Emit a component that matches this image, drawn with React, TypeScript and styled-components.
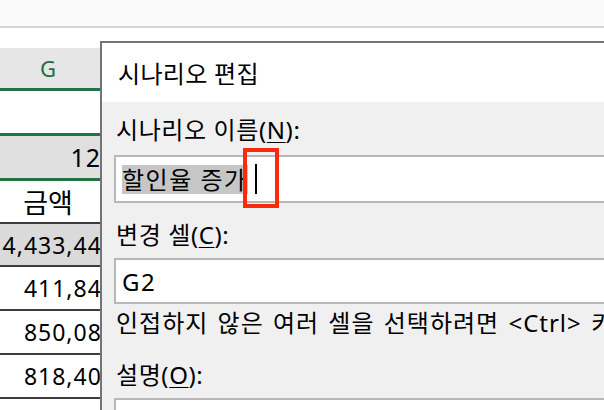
import styled, { createGlobalStyle } from "styled-components";

const GlobalStyle = createGlobalStyle`
  html, body {
    margin: 0;
    padding: 0;
    background: #ffffff;
  }
  body {
    width: 604px;
    height: 410px;
    overflow: hidden;
    font-family: "Noto Sans", "Noto Sans CJK KR", sans-serif;
    color: #000;
  }
`;

const Page = styled.div`
  width: 604px;
  height: 410px;
  overflow: hidden;
  display: flex;
  flex-direction: column;
`;

const TopBand = styled.div`
  height: 26px;
  flex: none;
  background: #fafafa;
  border-bottom: 2px solid #d4d4d4;
`;

const Workspace = styled.div`
  flex: 1;
  display: flex;
  align-items: flex-start;
  min-height: 0;
`;

const Sheet = styled.div`
  width: 100px;
  flex: none;
  overflow: hidden;
  padding-top: 20px;
`;

const Column = styled.div`
  width: 146px;
  margin-left: -25px;
  display: flex;
  flex-direction: column;
`;

const HeaderCell = styled.div`
  height: 40px;
  background: #e6e6e6;
  border-bottom: 3px solid #217346;
  display: flex;
  align-items: center;
  justify-content: center;
  font-size: 22px;
  color: #1f6e4a;
`;

type CellProps = {
  $fill?: string;
  $edge?: "green" | "dark";
  $align?: "center" | "right";
  $size?: number;
  $h?: number;
  $pad?: number;
};

const Cell = styled.div<CellProps>`
  height: ${(p) => p.$h ?? 42}px;
  background: ${(p) => p.$fill ?? "#ffffff"};
  border-bottom: ${(p) =>
    p.$edge === "green" ? "3px solid #217346" : "2px solid #3c3c3c"};
  display: flex;
  align-items: center;
  justify-content: ${(p) => (p.$align === "center" ? "center" : "flex-end")};
  padding-right: ${(p) => (p.$align === "center" ? 0 : p.$pad ?? 5)}px;
  font-size: ${(p) => p.$size ?? 23}px;
  letter-spacing: ${(p) => (p.$align === "center" ? 0 : 1)}px;
  white-space: nowrap;
`;

const Dialog = styled.div`
  flex: 1;
  margin-top: 13px;
  border-top: 2px solid #747474;
  border-left: 2px solid #747474;
  display: flex;
  flex-direction: column;
`;

const TitleBar = styled.div`
  height: 59px;
  background: #ffffff;
  display: flex;
  align-items: center;
  padding-left: 16px;
  font-size: 24px;
  letter-spacing: 0.3px;
`;

const Body = styled.div`
  background: #f0f0f0;
  padding: 14px 0 20px 14px;
  display: flex;
  flex-direction: column;
  height: 400px;
`;

const Label = styled.div<{ $gap?: number }>`
  height: 28px;
  line-height: 28px;
  font-size: 24px;
  letter-spacing: 0.6px;
  white-space: nowrap;
  margin-top: ${(p) => p.$gap ?? 0}px;
  u {
    text-decoration-thickness: 1px;
    text-underline-offset: 3px;
  }
`;

const Field = styled.div<{ $h: number; $gap: number }>`
  position: relative;
  height: ${(p) => p.$h}px;
  margin: ${(p) => p.$gap}px -40px 0 -2px;
  border: 2px solid #b8b8b8;
  background: #ffffff;
  display: flex;
  align-items: center;
  padding-left: 6px;
  font-size: 24px;
  letter-spacing: 1.5px;
  white-space: nowrap;
  box-sizing: border-box;
`;

const Selected = styled.span`
  background: #c6c6c6;
  line-height: 29px;
`;

const Caret = styled.span`
  width: 2px;
  height: 30px;
  background: #000;
  margin-left: 7px;
`;

const Marker = styled.div`
  position: absolute;
  left: 127px;
  top: -9px;
  width: 36px;
  height: 60px;
  box-sizing: border-box;
  border: 4px solid #fa2a0f;
`;

const Hint = styled.div`
  height: 28px;
  line-height: 28px;
  margin-top: 5px;
  font-size: 24px;
  letter-spacing: 1px;
  word-spacing: 2px;
  white-space: nowrap;
`;

const rows = ["4,433,440", "411,840", "850,080", "818,400", "2,792,000"];

export default function App() {
  return (
    <>
      <GlobalStyle />
      <Page>
        <TopBand />
        <Workspace>
          <Sheet>
            <Column>
              <HeaderCell>G</HeaderCell>
              <Cell $edge="green" />
              <Cell $edge="green" $fill="#e0e0e0" $size={25} $pad={20}>
                12
              </Cell>
              <Cell $h={41} $align="center" $size={27}>
                금액
              </Cell>
              {rows.map((r, i) => (
                <Cell key={r} $h={i === 0 ? 41 : 42} $fill={i === 0 ? "#dadada" : "#ffffff"}>
                  {r}
                </Cell>
              ))}
            </Column>
          </Sheet>
          <Dialog>
            <TitleBar>시나리오 편집</TitleBar>
            <Body>
              <Label>
                시나리오 이름(<u>N</u>):
              </Label>
              <Field $h={48} $gap={11}>
                <Selected>할인율 증가</Selected>
                <Caret />
                <Marker />
              </Field>
              <Label $gap={18}>
                변경 셀(<u>C</u>):
              </Label>
              <Field $h={46} $gap={9}>
                G2
              </Field>
              <Hint>인접하지 않은 여러 셀을 선택하려면 &lt;Ctrl&gt; 키를 누른 채 셀을 클릭하십시오.</Hint>
              <Label $gap={24}>
                설명(<u>O</u>):
              </Label>
              <Field $h={60} $gap={9} style={{ alignItems: "flex-start", paddingTop: 6 }}>
                만든 사람: 사용자 날짜: 2022-02-25
              </Field>
            </Body>
          </Dialog>
        </Workspace>
      </Page>
    </>
  );
}
